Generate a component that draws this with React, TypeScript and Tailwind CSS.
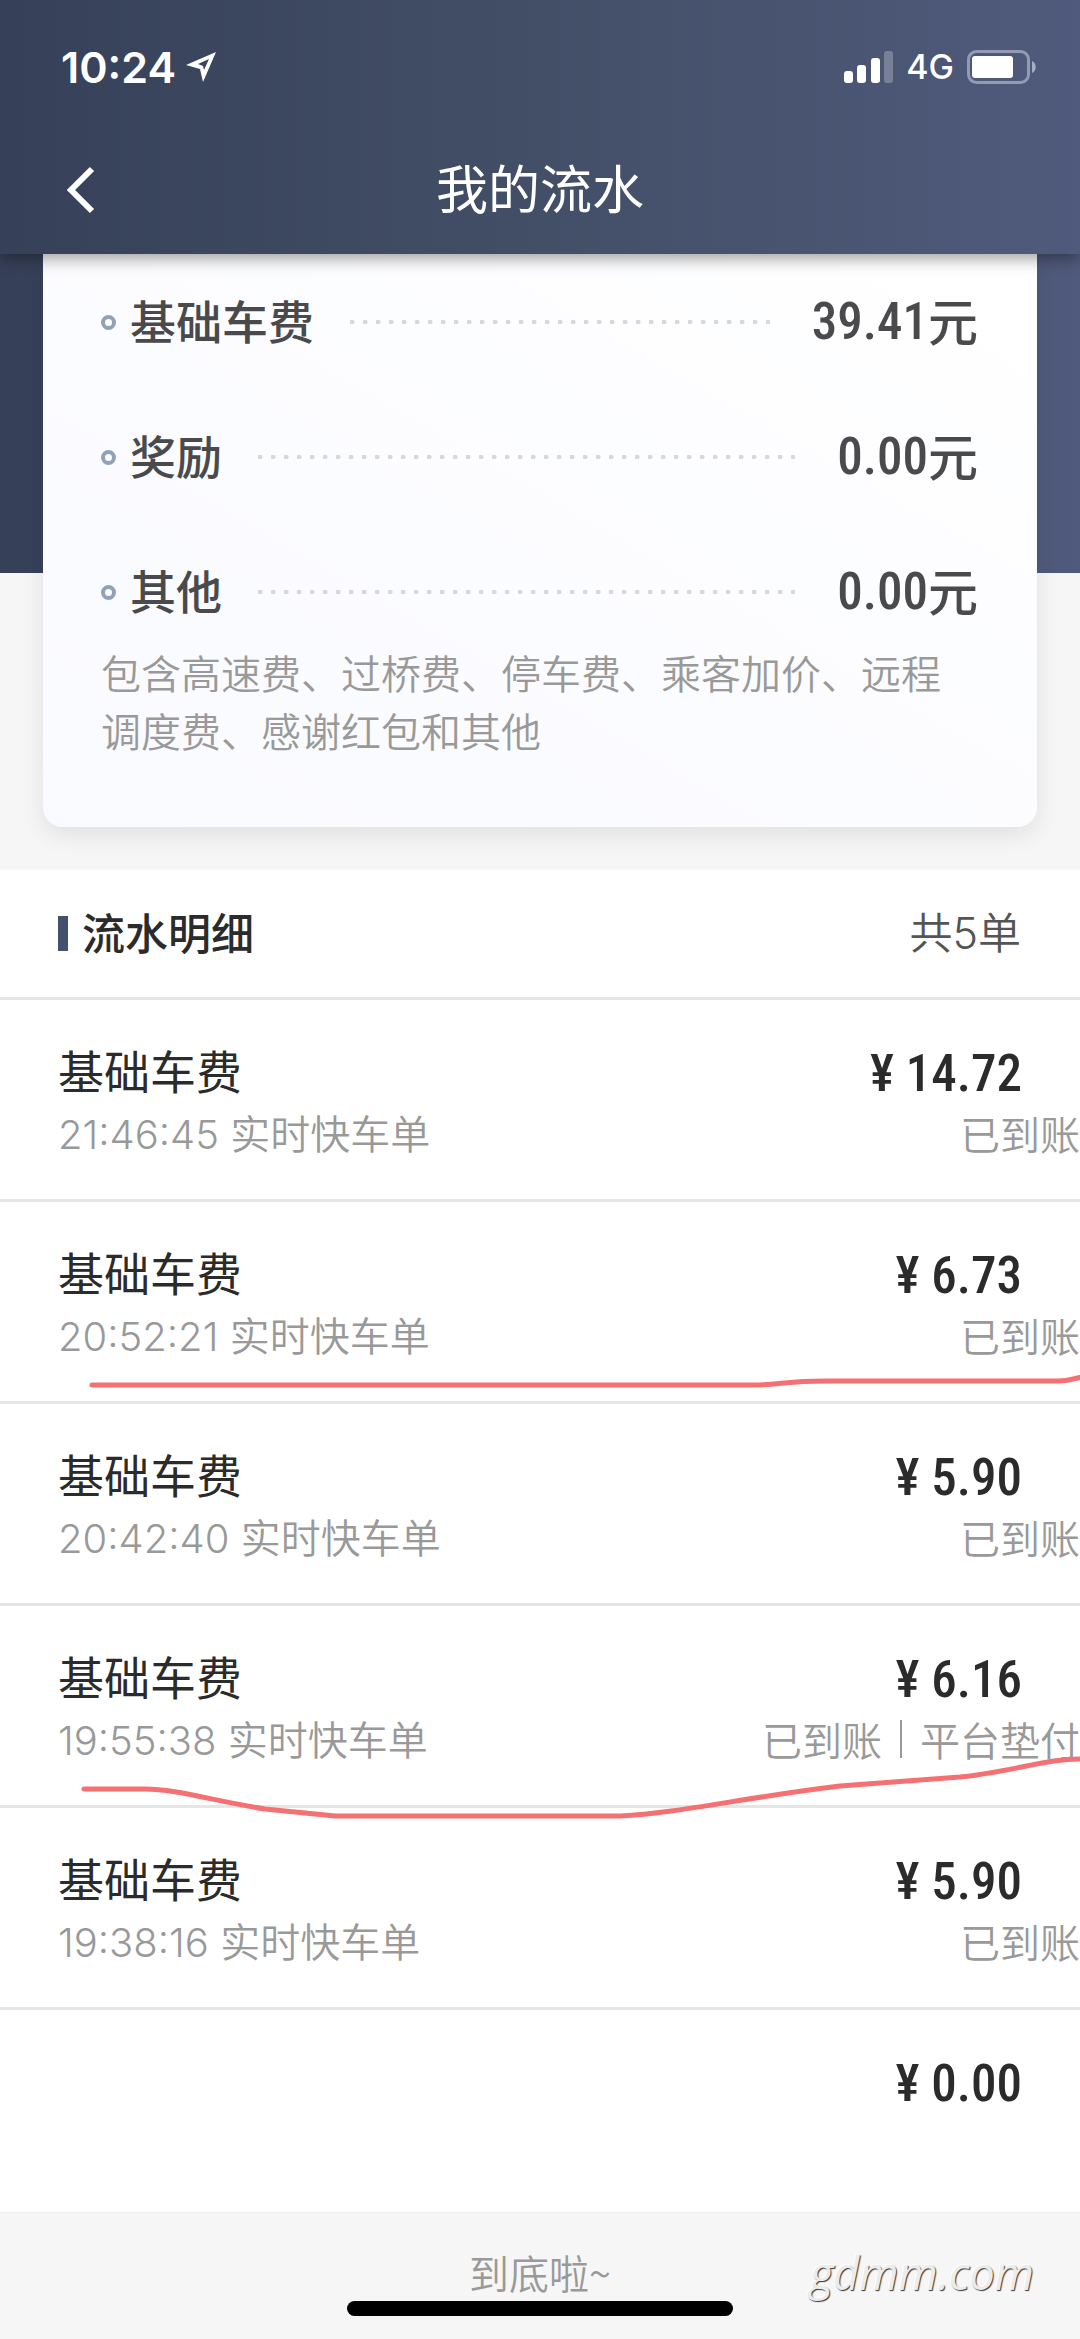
type Fee = { label: string; amount: string };

type Order = {
  title?: string;
  detail?: string;
  amount: string;
  status?: string[];
  mark?: string;
};

const fees: Fee[] = [
  { label: "基础车费", amount: "39.41" },
  { label: "奖励", amount: "0.00" },
  { label: "其他", amount: "0.00" },
];

// mark: hand-drawn stroke, in the row's own coordinates
const orders: Order[] = [
  { title: "基础车费", detail: "21:46:45 实时快车单", amount: "14.72", status: ["已到账"] },
  {
    title: "基础车费",
    detail: "20:52:21 实时快车单",
    amount: "6.73",
    status: ["已到账"],
    mark: "M92 183 H752 C780 183 785 179 825 179 H1058 C1068 179 1072 177 1082 175",
  },
  { title: "基础车费", detail: "20:42:40 实时快车单", amount: "5.90", status: ["已到账"] },
  {
    title: "基础车费",
    detail: "19:55:38 实时快车单",
    amount: "6.16",
    status: ["已到账", "平台垫付"],
    mark: "M84 183 H145 C175 183 210 194 265 203 L335 210 H620 C680 207 740 192 840 180 L960 171 C1010 166 1050 152 1082 153",
  },
  { title: "基础车费", detail: "19:38:16 实时快车单", amount: "5.90", status: ["已到账"] },
  { amount: "0.00" },
];

function StatusBar() {
  return (
    <div className="flex h-[134px] items-center justify-between pr-[42px] pl-[61px] text-white">
      <div className="flex items-center gap-[10px]">
        <span className="font-['Inter',sans-serif] text-[43px] leading-none font-semibold">10:24</span>
        <svg className="size-[30px]" viewBox="0 0 30 30" fill="white" aria-hidden="true">
          <path fillRule="evenodd" d="M30 0 L17 30 L14 17 L0 13 Z M23 7 L12 12 L17 14 L18 18 Z" />
        </svg>
      </div>
      <div className="flex items-center gap-[13px]">
        <svg className="h-[32px] w-[49px]" viewBox="0 0 49 32" fill="white" aria-hidden="true">
          <rect x="0" y="20" width="9" height="12" rx="3" />
          <rect x="13" y="14" width="9" height="18" rx="3" />
          <rect x="27" y="7" width="9" height="25" rx="3" />
          <rect x="40" y="0" width="9" height="32" rx="3" opacity="0.25" />
        </svg>
        <span className="font-['Inter',sans-serif] text-[34px] leading-none font-medium">4G</span>
        <svg className="h-[34px] w-[71px]" viewBox="0 0 71 34" aria-hidden="true">
          <rect x="1.5" y="1.5" width="60" height="31" rx="8" fill="none" stroke="#919bb3" strokeWidth="3" />
          <rect x="5" y="6" width="41" height="22" rx="3" fill="white" />
          <path d="M65 11 C70 13 70 21 65 23 Z" fill="#a6aec2" />
        </svg>
      </div>
    </div>
  );
}

function FeeRow({ label, amount }: Fee) {
  return (
    <div className="flex h-[68px] items-center">
      <span className="mr-[14px] size-[15px] rounded-full border-4 border-[#91a2b8]" />
      <span className="pb-[6px] text-[46px] leading-[62px] font-medium">{label}</span>
      <span className="mr-[42px] ml-[36px] h-[4px] flex-1 bg-[radial-gradient(circle_at_2px_2px,#d6d8dc_2px,transparent_3px)] bg-[size:13px_4px]" />
      <span className="flex items-center font-medium">
        <span className="font-['Roboto_Condensed','Roboto',sans-serif] text-[51px]">{amount}</span>
        <span className="pb-[6px] text-[50px] leading-[62px]">元</span>
      </span>
    </div>
  );
}

function OrderRow({ title, detail, amount, status, mark }: Order) {
  return (
    <li className="relative flex h-[202px] justify-between border-b-3 border-[#e6e6e6] pt-[37px] pl-[58px] last:border-transparent">
      <div>
        <p className="text-[46px] leading-[64px] text-[#2b2b2b]">{title}</p>
        <p className="pt-[5px] font-['Inter','Noto_Sans_CJK_SC',sans-serif] text-[40px] leading-[58px] font-[350] text-[#999]">
          {detail}
        </p>
      </div>
      <div className="flex flex-col items-end">
        <p className="mr-[58px] pt-[5px] font-['Roboto_Condensed','Roboto',sans-serif] text-[51px] leading-[64px] font-medium text-[#2b2b2b]">
          ¥ {amount}
        </p>
        {status && (
          <p className="flex items-center text-[40px] leading-[54px] font-[350] whitespace-nowrap text-[#999]">
            {status.map((text, i) => (
              <span key={text} className="flex items-center">
                {i > 0 && <span className="mx-[18px] h-[38px] w-[2px] bg-[#999]" />}
                {text}
              </span>
            ))}
          </p>
        )}
      </div>
      {mark && (
        <svg
          className="pointer-events-none absolute inset-x-0 top-0 z-10 h-[220px] w-full"
          viewBox="0 0 1080 220"
          preserveAspectRatio="none"
          fill="none"
          aria-hidden="true"
        >
          <path d={mark} stroke="#f57072" strokeWidth="5" strokeLinecap="round" strokeLinejoin="round" />
        </svg>
      )}
    </li>
  );
}

export default function App() {
  return (
    <div className="overflow-x-hidden bg-[#f6f6f6] font-['Noto_Sans_CJK_SC',sans-serif]">
      <header className="relative z-10 bg-linear-to-r from-[#364059] via-[#434f67] to-[#505a7c] shadow-[0_4px_16px_rgba(0,0,0,0.4)]">
        <StatusBar />
        <div className="grid h-[120px] grid-cols-3 items-start px-[62px] text-white">
          <button type="button" aria-label="返回" className="mt-[31px] h-[50px] w-[40px]">
            <svg className="h-[50px] w-[40px]" viewBox="0 0 40 50" fill="none" aria-hidden="true">
              <path d="M30 4 L9 25 L30 46" stroke="white" strokeWidth="6" />
            </svg>
          </button>
          <h1 className="mt-[15px] text-center text-[52px] leading-[76px] whitespace-nowrap">我的流水</h1>
        </div>
      </header>

      <main>
        <div className="bg-[linear-gradient(to_right,#364059,#434f67,#505a7c)] bg-[size:100%_319px] bg-no-repeat px-[43px] pb-[43px]">
          <section className="rounded-b-[20px] bg-linear-to-tr from-[#f9faff] to-white pt-[34px] pr-[59px] pb-[68px] pl-[58px] text-[#4a4a4c] shadow-[0_8px_24px_rgba(0,0,0,0.09)]">
            <div className="flex flex-col gap-[67px]">
              {fees.map((fee) => (
                <FeeRow key={fee.label} {...fee} />
              ))}
            </div>
            <p className="mt-[17px] text-[40px] leading-[58px] font-[350] text-[#999]">
              包含高速费、过桥费、停车费、乘客加价、远程调度费、感谢红包和其他
            </p>
          </section>
        </div>

        <section className="bg-white">
          <div className="flex h-[130px] items-center justify-between border-b-3 border-[#e6e6e6] pr-[59px] pl-[58px]">
            <h2 className="flex items-center gap-[14px] text-[43px] font-medium text-[#2b2b2b]">
              <span className="h-[35px] w-[10px] bg-[#42526e]" />
              <span className="pb-[5px] leading-[60px]">流水明细</span>
            </h2>
            <span className="font-['Inter','Noto_Sans_CJK_SC',sans-serif] text-[43px] font-[350] text-[#555]">共5单</span>
          </div>
          <ul>
            {orders.map((order, i) => (
              <OrderRow key={i} {...order} />
            ))}
          </ul>
        </section>
      </main>

      <footer className="relative flex flex-col items-center border-t border-[#f0f0f0] pt-[31px] pb-[23px]">
        <p className="text-[40px] leading-[57px] font-[350] text-[#999]">到底啦~</p>
        <div className="h-[15px] w-[386px] rounded-full bg-black" />
        <span className="absolute right-[46px] bottom-[36px] font-['Open_Sans',sans-serif] text-[45px] leading-[60px] text-[#ececec] italic [text-shadow:1px_1px_1px_#333,-1px_-1px_0_#fff]">
          gdmm.com
        </span>
      </footer>
    </div>
  );
}
